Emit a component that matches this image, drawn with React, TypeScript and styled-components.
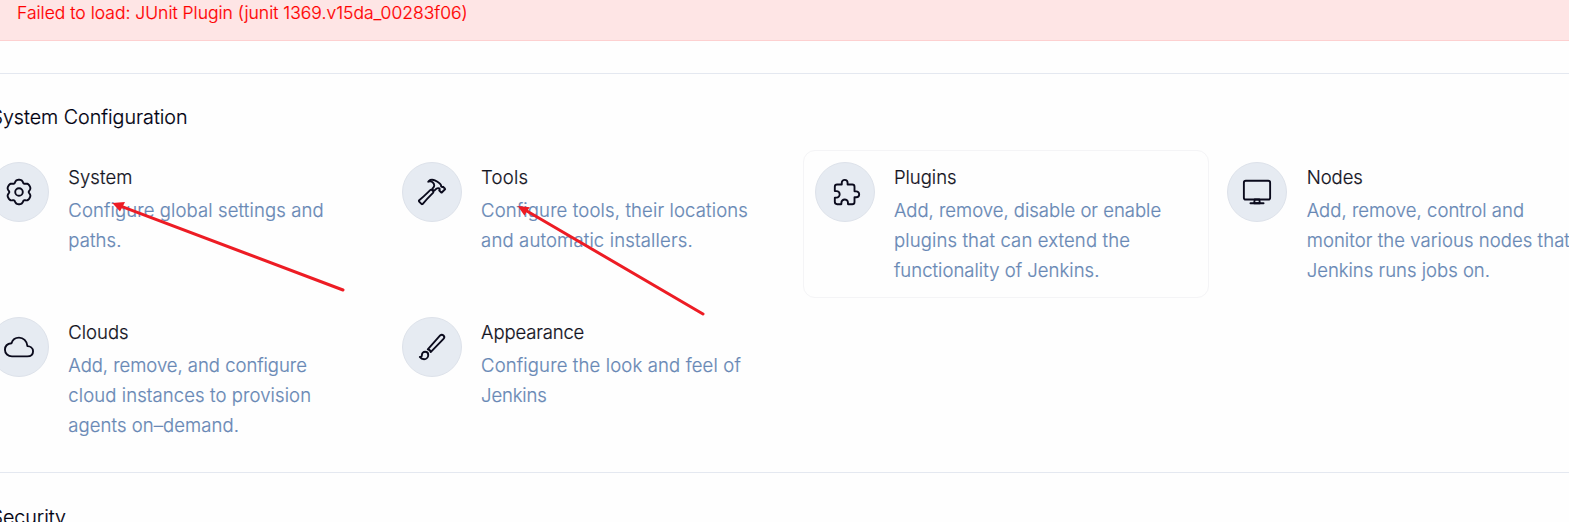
import React from 'react';
import styled, { createGlobalStyle } from 'styled-components';
import {
  IoBrushOutline,
  IoCloudOutline,
  IoExtensionPuzzleOutline,
  IoHammerOutline,
} from 'react-icons/io5';

const GlobalStyle = createGlobalStyle`
  * { box-sizing: border-box; }
  body {
    margin: 0;
    background: #fefefe;
    color: #14141f;
    font-family: Inter, 'Liberation Sans', sans-serif;
    font-weight: 300;
    -webkit-text-stroke: 0.2px currentColor;
    overflow: hidden;
  }
`;

const Page = styled.main`
  position: relative;
  height: 522px;
  overflow: hidden;
`;

const ErrorBanner = styled.div`
  height: 41px;
  padding: 1px 17px 0;
  background: #fee5e5;
  border-bottom: 1px solid #fdd0d0;
  color: #ff0000;
  font-size: 17.5px;
  line-height: 24px;
  white-space: nowrap;
`;

const Section = styled.section<{ $offset: number; $pad: number }>`
  margin-top: ${(p) => p.$offset}px;
  border-top: 1px solid #e4e8f0;
  padding-top: ${(p) => p.$pad}px;
`;

const SectionTitle = styled.h2`
  margin: 0 0 0 -9.5px;
  font-size: 19.7px;
  font-weight: 300;
  line-height: 30px;
  letter-spacing: -0.02px;
  color: #000010;
  white-space: nowrap;
`;

const Grid = styled.div`
  display: grid;
  grid-template-columns: repeat(4, 406px);
  column-gap: 6.8px;
  row-gap: 7px;
  margin: 18px 0 0 -23px;
`;

const Card = styled.a<{ $active?: boolean }>`
  display: flex;
  gap: 19px;
  height: 148px;
  padding: 11px;
  border: 1px solid ${(p) => (p.$active ? '#f4f4f6' : 'transparent')};
  border-radius: 12px;
`;

const IconCircle = styled.span<{ $nudge?: number }>`
  display: flex;
  flex: none;
  align-items: center;
  justify-content: center;
  width: 60px;
  height: 60px;
  padding-left: ${(p) => p.$nudge ?? 0}px;
  border: 1px solid #dde2ea;
  border-radius: 50%;
  background: #e6ebf2;
  color: #0a0a1c;
`;

const CardText = styled.div`
  padding-left: 0.3px;
  font-size: 18.5px;
  line-height: 30px;
  white-space: nowrap;
`;

const CardTitle = styled.div<{ $track: number }>`
  margin-bottom: 3px;
  letter-spacing: ${(p) => p.$track}px;
`;

const Line = styled.div<{ $track: number }>`
  color: #6888b5;
  letter-spacing: ${(p) => p.$track}px;
`;

const Annotations = styled.svg`
  position: absolute;
  top: 0;
  left: 0;
  pointer-events: none;
`;

// Outline of a six-lobed gear with rounded notches, centred on 15,15.
const gearPath =
  Array.from({ length: 120 }, (_, i) => {
    const a = (i / 120) * Math.PI * 2;
    const r = 12.2 - 2.5 * Math.pow((1 - Math.cos(6 * a)) / 2, 2.2);
    const x = (15 + r * Math.sin(a)).toFixed(2);
    const y = (15 - r * Math.cos(a)).toFixed(2);
    return `${i ? 'L' : 'M'}${x} ${y}`;
  }).join('') + 'Z';

function GearIcon() {
  return (
    <svg width="30" height="30" viewBox="0 0 30 30" fill="none" stroke="currentColor" strokeWidth="1.9" strokeLinejoin="round">
      <path d={gearPath} />
      <circle cx="15" cy="15" r="3.8" />
    </svg>
  );
}

function DesktopIcon() {
  return (
    <svg width="30" height="30" viewBox="0 0 512 512" fill="none" stroke="currentColor" strokeWidth="32" strokeLinejoin="round" strokeLinecap="round">
      <rect x="32" y="64" width="448" height="320" rx="32" />
      <path d="M304 448l-8-64h-80l-8 64h96z" />
      <path d="M368 448H144" />
    </svg>
  );
}

type TextLine = [text: string, track: number];

interface Item {
  title: TextLine;
  lines: TextLine[];
  icon: React.ReactNode;
  iconNudge?: number;
  active?: boolean;
}

const items: Item[] = [
  {
    title: ['System', 0.05],
    lines: [['Configure global settings and', 0.12], ['paths.', 0.1]],
    icon: <GearIcon />,
  },
  {
    title: ['Tools', 0.2],
    lines: [['Configure tools, their locations', 0.14], ['and automatic installers.', 0.155]],
    icon: <IoHammerOutline size={30} />,
  },
  {
    title: ['Plugins', 0],
    lines: [
      ['Add, remove, disable or enable', 0],
      ['plugins that can extend the', 0.14],
      ['functionality of Jenkins.', 0.03],
    ],
    icon: <IoExtensionPuzzleOutline size={30} />,
    iconNudge: 4,
    active: true,
  },
  {
    title: ['Nodes', -0.05],
    lines: [
      ['Add, remove, control and', 0.03],
      ['monitor the various nodes that', 0.06],
      ['Jenkins runs jobs on.', 0],
    ],
    icon: <DesktopIcon />,
  },
  {
    title: ['Clouds', 0],
    lines: [
      ['Add, remove, and configure', -0.03],
      ['cloud instances to provision', 0.1],
      ['agents on–demand.', 0.07],
    ],
    icon: <IoCloudOutline size={30} />,
  },
  {
    title: ['Appearance', -0.15],
    lines: [['Configure the look and feel of', 0.144], ['Jenkins', -0.16]],
    icon: <IoBrushOutline size={30} />,
  },
];

export default function App() {
  return (
    <Page>
      <GlobalStyle />
      <ErrorBanner>Failed to load: JUnit Plugin (junit 1369.v15da_00283f06)</ErrorBanner>
      <Section $offset={32} $pad={28}>
        <SectionTitle>System Configuration</SectionTitle>
        <Grid>
          {items.map((item) => (
            <Card key={item.title[0]} $active={item.active}>
              <IconCircle $nudge={item.iconNudge}>{item.icon}</IconCircle>
              <CardText>
                <CardTitle $track={item.title[1]}>{item.title[0]}</CardTitle>
                {item.lines.map(([text, track]) => (
                  <Line key={text} $track={track}>{text}</Line>
                ))}
              </CardText>
            </Card>
          ))}
        </Grid>
      </Section>
      <Section $offset={19} $pad={29}>
        <SectionTitle>Security</SectionTitle>
      </Section>
      <Annotations width="1569" height="522" fill="#ed1c24" stroke="#ed1c24">
        <path d="M122 206.7L343 290" strokeWidth="3" strokeLinecap="round" />
        <path d="M112.3 203L125 202L122.5 207L120 211.5Z" stroke="none" />
        <path d="M526 210.5L703 314" strokeWidth="3" strokeLinecap="round" />
        <path d="M517.8 206L529.8 207.2L527 211L524.5 215.8Z" stroke="none" />
      </Annotations>
    </Page>
  );
}
